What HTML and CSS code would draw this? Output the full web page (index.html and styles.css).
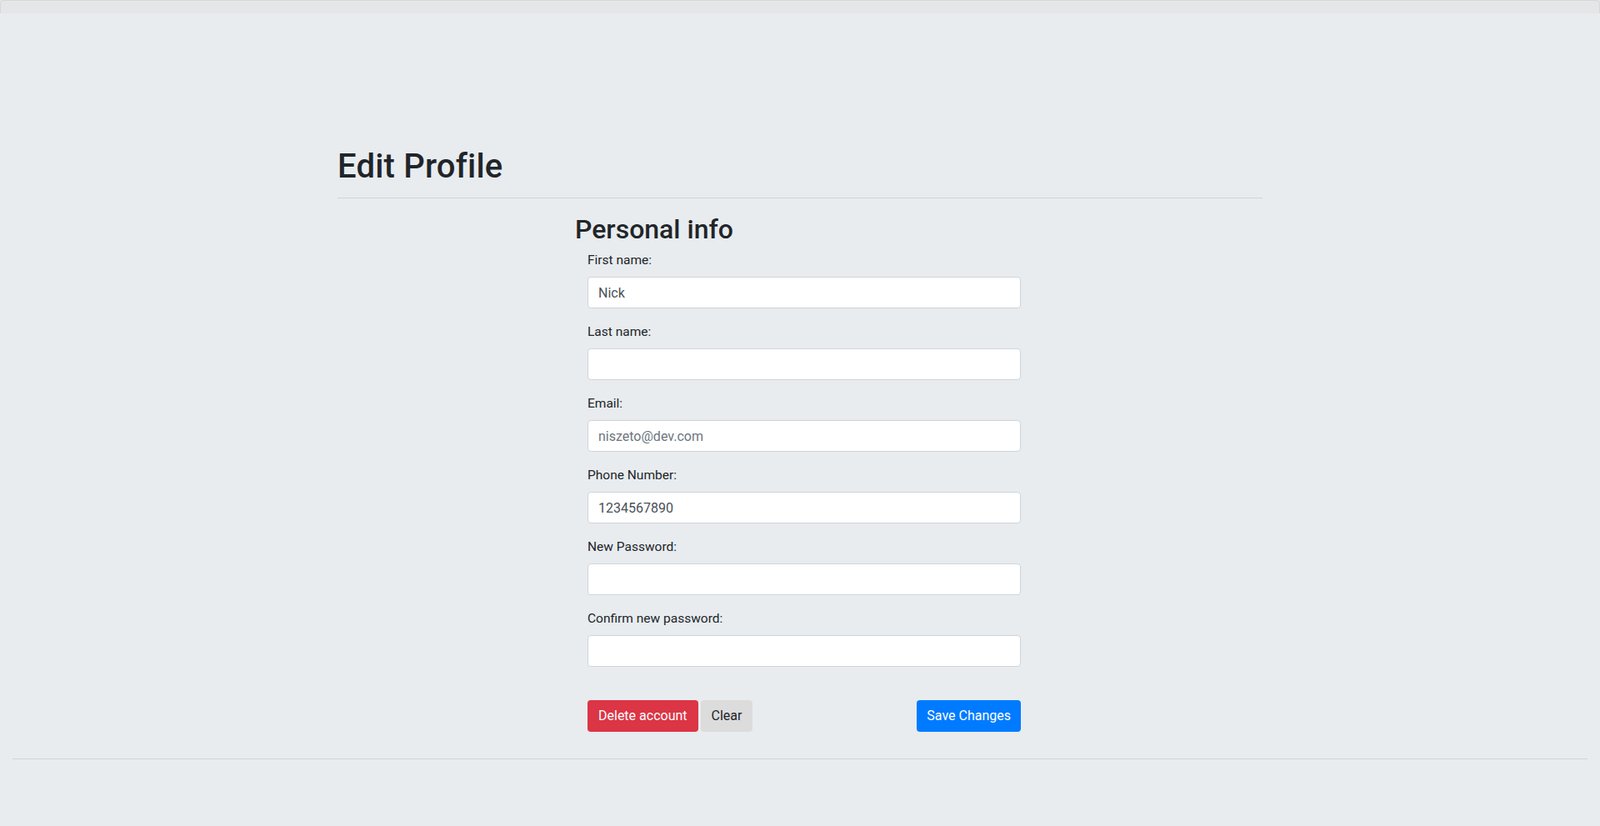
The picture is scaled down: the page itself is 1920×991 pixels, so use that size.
FILE: index.html
```html
<!DOCTYPE html>
<html lang="en">
<head>
<meta charset="utf-8">
<title>Edit Profile</title>
<link rel="stylesheet" href="styles.css">
</head>
<body>
<div class="topbar"></div>
<main class="container">
  <h1 class="page-title">Edit Profile</h1>
  <hr class="rule">
  <section class="personal">
    <h2 class="section-title">Personal info</h2>
    <form class="form">
      <div class="group">
        <label class="label">First name:</label>
        <input class="input" type="text" value="Nick">
      </div>
      <div class="group">
        <label class="label">Last name:</label>
        <input class="input" type="text" value="">
      </div>
      <div class="group">
        <label class="label">Email:</label>
        <input class="input" type="text" placeholder="niszeto@dev.com">
      </div>
      <div class="group">
        <label class="label">Phone Number:</label>
        <input class="input" type="text" value="1234567890">
      </div>
      <div class="group">
        <label class="label">New Password:</label>
        <input class="input" type="password" value="">
      </div>
      <div class="group">
        <label class="label">Confirm new password:</label>
        <input class="input" type="password" value="">
      </div>
      <div class="actions">
        <div class="actions-left">
          <button type="button" class="btn btn-danger">Delete account</button>
          <button type="button" class="btn btn-light">Clear</button>
        </div>
        <button type="button" class="btn btn-primary">Save Changes</button>
      </div>
    </form>
  </section>
</main>
<hr class="footer-rule">
</body>
</html>
```

FILE: styles.css
```css
* { box-sizing: border-box; }
html, body { margin: 0; padding: 0; }
body {
  background: #e8ecef;
  font-family: Roboto, "Liberation Sans", sans-serif;
  font-size: 16px;
  line-height: 1.5;
  color: #212529;
  min-height: 991px;
}
.topbar {
  height: 16px;
  background: #e4e6e8;
  border: 1px solid #d6d8da;
  border-bottom: none;
  border-radius: 4px 4px 0 0;
}
.container {
  width: 1110px;
  margin: 0 auto;
  padding-top: 160px;
}
.page-title {
  margin: 0;
  font-size: 40px;
  font-weight: 500;
  letter-spacing: 0.2px;
  line-height: 48px;
}
.rule {
  margin: 13px 0 0;
  border: 0;
  border-top: 1px solid #d0d4d7;
}
.personal {
  padding-left: 285px;
}
.section-title {
  margin: 18px 0 0;
  font-size: 32px;
  font-weight: 500;
  line-height: 38px;
}
.form {
  width: 535px;
  padding-left: 15px;
  margin-top: 6px;
}
.group {
  margin-bottom: 16px;
}
.label {
  display: block;
  font-size: 15.5px;
  line-height: 24px;
  margin-bottom: 8px;
}
.input {
  display: block;
  width: 520px;
  height: 38px;
  padding: 6px 12px;
  font-family: inherit;
  font-size: 16px;
  color: #495057;
  background: #fff;
  border: 1px solid #ced4da;
  border-radius: 4px;
  outline: none;
}
.input::placeholder { color: #6c757d; }
.actions {
  width: 520px;
  margin-top: 40px;
  display: flex;
  justify-content: space-between;
  align-items: center;
}
.actions-left {
  display: flex;
  gap: 3px;
}
.btn {
  height: 38px;
  padding: 0 12px;
  font-family: inherit;
  font-size: 16px;
  line-height: 36px;
  border: 1px solid transparent;
  border-radius: 4px;
  cursor: pointer;
}
.btn-danger { background: #dc3545; color: #fff; }
.btn-light { background: #dcdcdc; color: #212529; }
.btn-primary { background: #007bff; color: #fff; padding: 0 11px; }
.footer-rule {
  margin: 32px 15px 0;
  border: 0;
  border-top: 1px solid #cfd3d6;
}
```
